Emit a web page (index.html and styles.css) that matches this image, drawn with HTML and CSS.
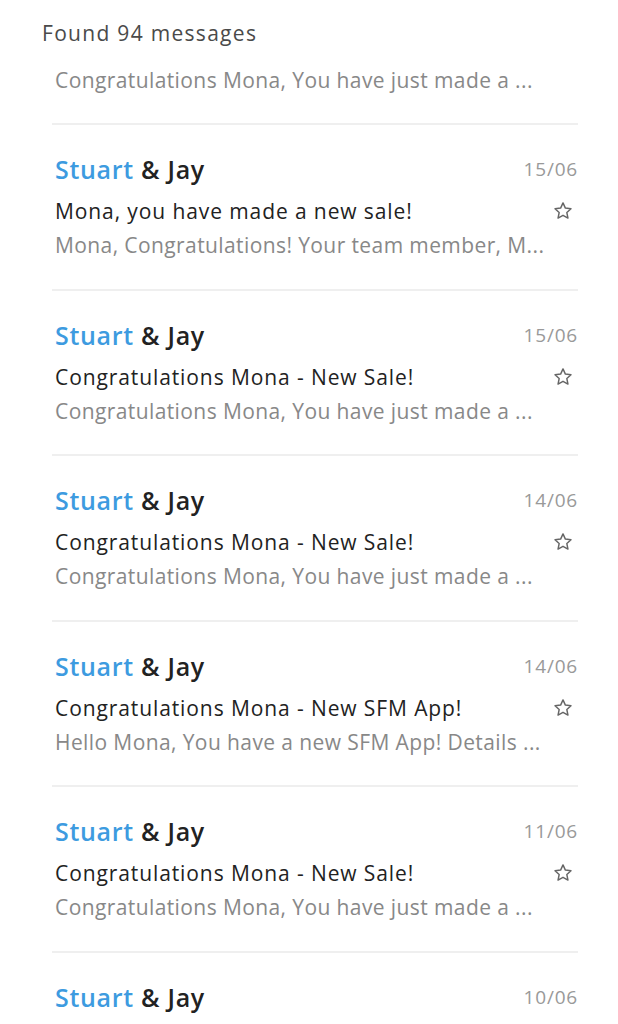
FILE: index.html
```html
<!DOCTYPE html>
<html lang="en">
<head>
    <meta charset="UTF-8">
    <meta name="viewport" content="width=device-width, initial-scale=1.0">
    <title>Search results</title>
    <link rel="stylesheet" href="styles.css">
</head>
<body>
    <!-- Result count -->
    <div class="found">Found 94 messages</div>

    <div class="list">
        <!-- Partial item scrolled off the top -->
        <div class="item item-partial">
            <div class="preview">Congratulations Mona, You have just made a ...</div>
        </div>

        <div class="item">
            <div class="row">
                <div class="sender"><span class="first">Stuart</span> &amp; Jay</div>
                <div class="date">15/06</div>
            </div>
            <div class="row subject-row">
                <div class="subject">Mona, you have made a new sale!</div>
                <svg class="star" viewBox="0 0 24 24"><path d="M12 3.2l2.6 5.6 6.1.7-4.5 4.2 1.2 6-5.4-3-5.4 3 1.2-6-4.5-4.2 6.1-.7z"/></svg>
            </div>
            <div class="preview">Mona, Congratulations! Your team member, M...</div>
        </div>

        <div class="item">
            <div class="row">
                <div class="sender"><span class="first">Stuart</span> &amp; Jay</div>
                <div class="date">15/06</div>
            </div>
            <div class="row subject-row">
                <div class="subject">Congratulations Mona - New Sale!</div>
                <svg class="star" viewBox="0 0 24 24"><path d="M12 3.2l2.6 5.6 6.1.7-4.5 4.2 1.2 6-5.4-3-5.4 3 1.2-6-4.5-4.2 6.1-.7z"/></svg>
            </div>
            <div class="preview">Congratulations Mona, You have just made a ...</div>
        </div>

        <div class="item">
            <div class="row">
                <div class="sender"><span class="first">Stuart</span> &amp; Jay</div>
                <div class="date">14/06</div>
            </div>
            <div class="row subject-row">
                <div class="subject">Congratulations Mona - New Sale!</div>
                <svg class="star" viewBox="0 0 24 24"><path d="M12 3.2l2.6 5.6 6.1.7-4.5 4.2 1.2 6-5.4-3-5.4 3 1.2-6-4.5-4.2 6.1-.7z"/></svg>
            </div>
            <div class="preview">Congratulations Mona, You have just made a ...</div>
        </div>

        <div class="item">
            <div class="row">
                <div class="sender"><span class="first">Stuart</span> &amp; Jay</div>
                <div class="date">14/06</div>
            </div>
            <div class="row subject-row">
                <div class="subject">Congratulations Mona - New SFM App!</div>
                <svg class="star" viewBox="0 0 24 24"><path d="M12 3.2l2.6 5.6 6.1.7-4.5 4.2 1.2 6-5.4-3-5.4 3 1.2-6-4.5-4.2 6.1-.7z"/></svg>
            </div>
            <div class="preview">Hello Mona, You have a new SFM App! Details ...</div>
        </div>

        <div class="item">
            <div class="row">
                <div class="sender"><span class="first">Stuart</span> &amp; Jay</div>
                <div class="date">11/06</div>
            </div>
            <div class="row subject-row">
                <div class="subject">Congratulations Mona - New Sale!</div>
                <svg class="star" viewBox="0 0 24 24"><path d="M12 3.2l2.6 5.6 6.1.7-4.5 4.2 1.2 6-5.4-3-5.4 3 1.2-6-4.5-4.2 6.1-.7z"/></svg>
            </div>
            <div class="preview">Congratulations Mona, You have just made a ...</div>
        </div>

        <!-- Last item, only its first row is on screen -->
        <div class="item">
            <div class="row">
                <div class="sender"><span class="first">Stuart</span> &amp; Jay</div>
                <div class="date">10/06</div>
            </div>
        </div>
    </div>
</body>
</html>
```

FILE: styles.css
```css
body {
    margin: 0;
    background: #fff;
    font-family: "Open Sans", Roboto, sans-serif;
    overflow: hidden;
    height: 1024px;
}
.found {
    padding: 18px 0 0 42px;
    height: 30px;
    line-height: 30px;
    font-size: 21px;
    letter-spacing: 1.3px;
    color: #4a4a4a;
}
.list {
    margin: 0 40px 0 52px;
}
.item {
    padding: 27px 0 26.5px 3px;
    border-top: 2px solid #efefef;
}
.item-partial {
    border-top: none;
    padding-top: 15px;
    padding-bottom: 26px;
}
.row {
    display: flex;
    justify-content: space-between;
    align-items: center;
    height: 34px;
    line-height: 34px;
}
.subject-row {
    margin-top: 8px;
}
.sender {
    font-size: 25px;
    font-weight: 600;
    letter-spacing: 0.7px;
    color: #222;
}
.sender .first {
    color: #3d9be0;
}
.date {
    font-size: 19px;
    letter-spacing: 0.8px;
    color: #999;
}
.subject {
    font-size: 21px;
    letter-spacing: 0.9px;
    color: #222;
}
.star {
    width: 22px;
    height: 22px;
    margin-right: 4px;
    fill: none;
    stroke: #666;
    stroke-width: 1.6;
    stroke-linejoin: round;
}
.preview {
    height: 34px;
    line-height: 34px;
    font-size: 21px;
    letter-spacing: 0.4px;
    color: #888;
}
```
